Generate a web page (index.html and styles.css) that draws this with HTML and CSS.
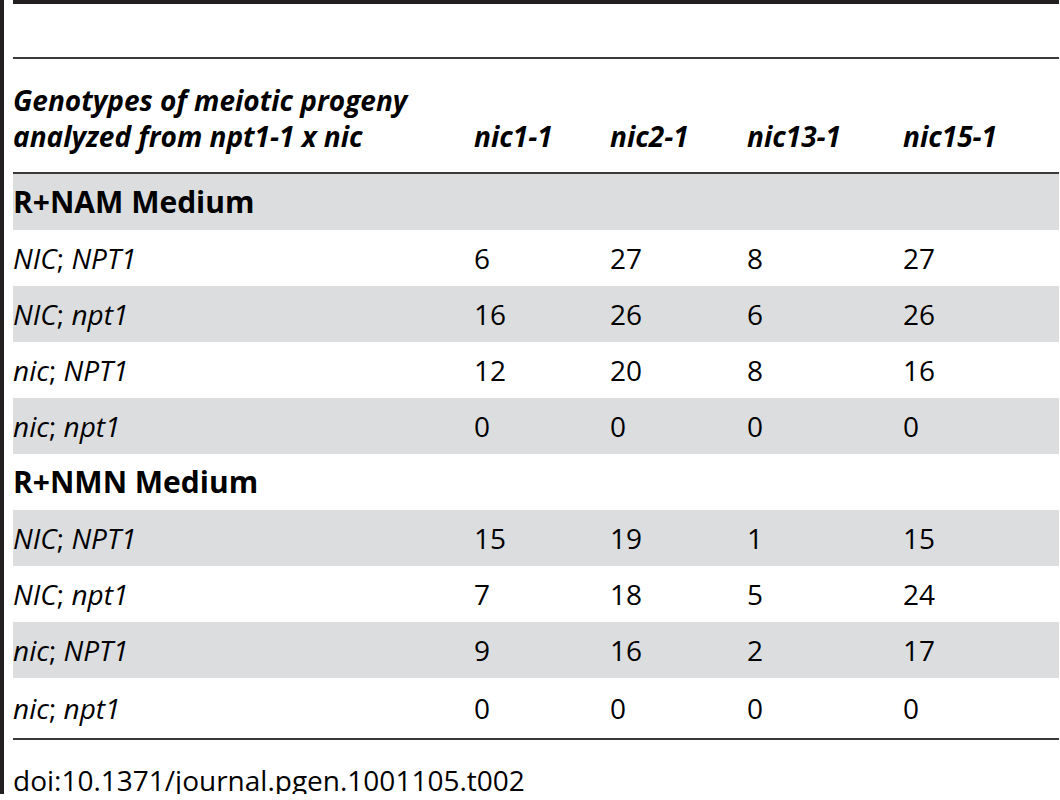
FILE: index.html
```html
<!DOCTYPE html>
<html>
<head>
<meta charset="utf-8">
<link rel="stylesheet" href="styles.css">
</head>
<body>
<div class="wrap">
  <div class="topbar"></div>
  <div class="spacer"></div>
  <table class="tbl">
    <colgroup>
      <col class="c1"><col class="c2"><col class="c3"><col class="c4"><col class="c5">
    </colgroup>
    <thead>
      <tr>
        <th>Genotypes of meiotic progeny<br>analyzed from npt1-1 x nic</th>
        <th>nic1-1</th>
        <th>nic2-1</th>
        <th>nic13-1</th>
        <th>nic15-1</th>
      </tr>
    </thead>
    <tbody>
      <tr class="grey"><td class="sec" colspan="5">R+NAM Medium</td></tr>
      <tr><td><i>NIC</i>; <i>NPT1</i></td><td>6</td><td>27</td><td>8</td><td>27</td></tr>
      <tr class="grey"><td><i>NIC</i>; <i>npt1</i></td><td>16</td><td>26</td><td>6</td><td>26</td></tr>
      <tr><td><i>nic</i>; <i>NPT1</i></td><td>12</td><td>20</td><td>8</td><td>16</td></tr>
      <tr class="grey"><td><i>nic</i>; <i>npt1</i></td><td>0</td><td>0</td><td>0</td><td>0</td></tr>
      <tr><td class="sec" colspan="5">R+NMN Medium</td></tr>
      <tr class="grey"><td><i>NIC</i>; <i>NPT1</i></td><td>15</td><td>19</td><td>1</td><td>15</td></tr>
      <tr><td><i>NIC</i>; <i>npt1</i></td><td>7</td><td>18</td><td>5</td><td>24</td></tr>
      <tr class="grey"><td><i>nic</i>; <i>NPT1</i></td><td>9</td><td>16</td><td>2</td><td>17</td></tr>
      <tr class="last"><td><i>nic</i>; <i>npt1</i></td><td>0</td><td>0</td><td>0</td><td>0</td></tr>
    </tbody>
  </table>
  <div class="doi">doi:10.1371/journal.pgen.1001105.t002</div>
</div>
</body>
</html>
```

FILE: styles.css
```css
html, body {
  margin: 0;
  padding: 0;
  background: #ffffff;
}
body {
  font-family: "Open Sans", "DejaVu Sans", sans-serif;
  color: #000000;
}
.wrap {
  width: 1046px;
  border-left: 4px solid #231f20;
  padding-left: 9px;
}
.topbar {
  height: 4px;
  background: #231f20;
}
.spacer {
  height: 53px;
}
.tbl {
  width: 1046px;
  border-collapse: collapse;
  table-layout: fixed;
  border-top: 2px solid #3a3a3a;
  border-bottom: 2px solid #3a3a3a;
}
.c1 { width: 461px; }
.c2 { width: 136px; }
.c3 { width: 137px; }
.c4 { width: 156px; }
.c5 { width: 156px; }
.tbl thead th {
  text-align: left;
  font-style: italic;
  font-weight: 700;
  font-size: 28px;
  line-height: 36px;
  padding: 23px 0 18px 0;
  vertical-align: bottom;
  border-bottom: 2px solid #3a3a3a;
}
.tbl tbody td {
  height: 56px;
  padding: 0;
  font-size: 28px;
  line-height: 36px;
  vertical-align: middle;
}
.tbl tbody td.sec {
  font-weight: 700;
  font-size: 30px;
}
.tbl tbody tr.grey td {
  background: #dcdddf;
}
.tbl tbody tr.last td {
  height: 60px;
}
.doi {
  font-size: 28px;
  line-height: 28px;
  padding-top: 26px;
}
```
